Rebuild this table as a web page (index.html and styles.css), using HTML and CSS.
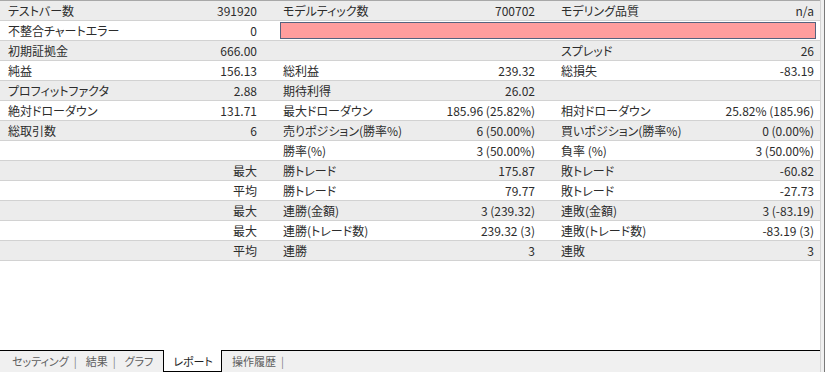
FILE: index.html
```html
<!DOCTYPE html>
<html lang="ja">
<head>
<meta charset="utf-8">
<link rel="stylesheet" href="styles.css">
</head>
<body>
<div class="window">
<div class="panel">
  <div class="report">
    <div class="row odd">
      <div class="cell c1"><span>テストバー数</span><span>391920</span></div>
      <div class="cell c2"><span>モデルティック数</span><span>700702</span></div>
      <div class="cell c3"><span>モデリング品質</span><span>n/a</span></div>
    </div>
    <div class="row even">
      <div class="cell c1"><span>不整合チャートエラー</span><span>0</span></div>
      <div class="quality"><div class="bar"></div></div>
    </div>
    <div class="row odd">
      <div class="cell c1"><span>初期証拠金</span><span>666.00</span></div>
      <div class="cell c2"></div>
      <div class="cell c3"><span>スプレッド</span><span>26</span></div>
    </div>
    <div class="row even">
      <div class="cell c1"><span>純益</span><span>156.13</span></div>
      <div class="cell c2"><span>総利益</span><span>239.32</span></div>
      <div class="cell c3"><span>総損失</span><span>-83.19</span></div>
    </div>
    <div class="row odd">
      <div class="cell c1"><span>プロフィットファクタ</span><span>2.88</span></div>
      <div class="cell c2"><span>期待利得</span><span>26.02</span></div>
      <div class="cell c3"></div>
    </div>
    <div class="row even">
      <div class="cell c1"><span>絶対ドローダウン</span><span>131.71</span></div>
      <div class="cell c2"><span>最大ドローダウン</span><span>185.96 (25.82%)</span></div>
      <div class="cell c3"><span>相対ドローダウン</span><span>25.82% (185.96)</span></div>
    </div>
    <div class="row odd">
      <div class="cell c1"><span>総取引数</span><span>6</span></div>
      <div class="cell c2"><span>売りポジション(勝率%)</span><span>6 (50.00%)</span></div>
      <div class="cell c3"><span>買いポジション(勝率%)</span><span>0 (0.00%)</span></div>
    </div>
    <div class="row even">
      <div class="cell c1"></div>
      <div class="cell c2"><span>勝率(%)</span><span>3 (50.00%)</span></div>
      <div class="cell c3"><span>負率 (%)</span><span>3 (50.00%)</span></div>
    </div>
    <div class="row odd">
      <div class="cell c1"><span></span><span>最大</span></div>
      <div class="cell c2"><span>勝トレード</span><span>175.87</span></div>
      <div class="cell c3"><span>敗トレード</span><span>-60.82</span></div>
    </div>
    <div class="row even">
      <div class="cell c1"><span></span><span>平均</span></div>
      <div class="cell c2"><span>勝トレード</span><span>79.77</span></div>
      <div class="cell c3"><span>敗トレード</span><span>-27.73</span></div>
    </div>
    <div class="row odd">
      <div class="cell c1"><span></span><span>最大</span></div>
      <div class="cell c2"><span>連勝(金額)</span><span>3 (239.32)</span></div>
      <div class="cell c3"><span>連敗(金額)</span><span>3 (-83.19)</span></div>
    </div>
    <div class="row even">
      <div class="cell c1"><span></span><span>最大</span></div>
      <div class="cell c2"><span>連勝(トレード数)</span><span>239.32 (3)</span></div>
      <div class="cell c3"><span>連敗(トレード数)</span><span>-83.19 (3)</span></div>
    </div>
    <div class="row odd">
      <div class="cell c1"><span></span><span>平均</span></div>
      <div class="cell c2"><span>連勝</span><span>3</span></div>
      <div class="cell c3"><span>連敗</span><span>3</span></div>
    </div>
  </div>
  <div class="filler"></div>
  <div class="tabs">
    <span class="tab">セッティング</span><span class="sep">|</span>
    <span class="tab">結果</span><span class="sep">|</span>
    <span class="tab">グラフ</span>
    <span class="tab active">レポート</span>
    <span class="tab">操作履歴</span><span class="sep">|</span>
  </div>
</div>
<div class="edge"></div>
</div>
</body>
</html>
```

FILE: styles.css
```css
html, body {
  margin: 0;
  padding: 0;
}
body {
  background: #f0f0f0;
  font-family: "Noto Sans CJK JP", sans-serif;
  font-size: 12px;
  font-feature-settings: "palt";
  color: #2c2c2c;
  width: 825px;
  height: 372px;
  overflow: hidden;
}
.window {
  display: flex;
  height: 372px;
}
.panel {
  width: 820px;
  height: 372px;
  background: #ffffff;
  border-right: 1px solid #d4d4d4;
  display: flex;
  flex-direction: column;
}
.edge {
  width: 1px;
  margin-left: 3px;
  background: #7a7a7a;
}
.report {
  border-top: 1px solid #a8a8a8;
}
.row {
  display: grid;
  grid-template-columns: 275px 278px 1fr;
  height: 19px;
  border-bottom: 1px solid #d2d2d2;
}
.row.odd {
  background: #ececec;
}
.row.even {
  background: #ffffff;
}
.cell {
  display: flex;
  justify-content: space-between;
  align-items: center;
  line-height: 19px;
  white-space: nowrap;
  padding-left: 8px;
  padding-right: 18px;
}
.cell.c3 {
  padding-right: 6px;
}
.quality {
  grid-column: 2 / 4;
  padding: 1px 4px 1px 5px;
}
.bar {
  height: 15px;
  background: #ff9d9d;
  border: 1px solid #55627e;
}
.filler {
  flex: 1;
}
.tabs {
  height: 21px;
  border-top: 1px solid #000;
  background: #f0f0f0;
  display: flex;
  align-items: stretch;
  padding-left: 12px;
  color: #5e5e5e;
  font-size: 11px;
  line-height: 21px;
}
.tab {
  display: block;
}
.sep {
  display: block;
  color: #808080;
  padding: 0 9px 0 5px;
}
.tab.active {
  margin: -1px 10px 0 10px;
  padding: 1px 8px 0 9px;
  background: #ffffff;
  border: 1px solid #000;
  border-top: none;
  color: #1e1e1e;
}
```
